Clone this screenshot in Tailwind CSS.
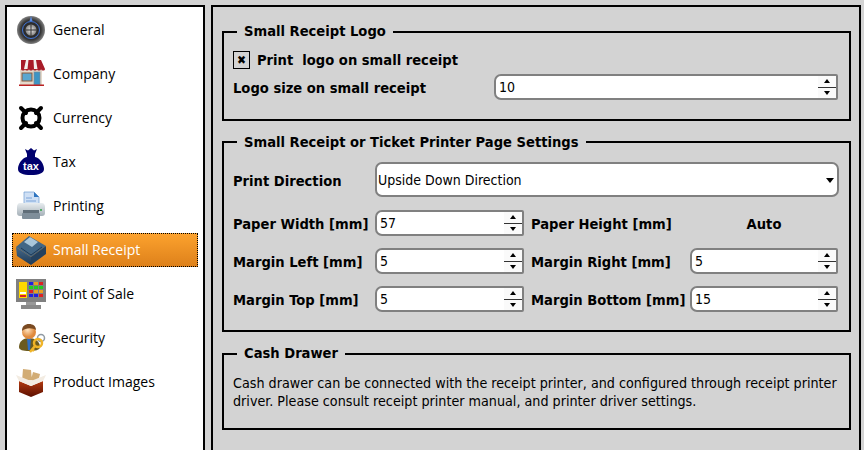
<!DOCTYPE html>
<html lang="en">
<head>
    <meta charset="UTF-8">
    <title>Settings - Small Receipt</title>
    <script src="https://cdn.jsdelivr.net/npm/@tailwindcss/browser@4"></script>
</head>
<body class="h-[450px] overflow-hidden bg-[#d3d3d3] font-['DejaVu_Sans_Condensed',sans-serif] text-black">
    <svg class="absolute h-0 w-0">
        <defs>
            <linearGradient id="boxRed" x1="0" y1="0" x2="0" y2="1"><stop offset="0" stop-color="#b23a10"/><stop offset="1" stop-color="#5c0f00"/></linearGradient>
            <linearGradient id="printerBody" x1="0" y1="0" x2="0" y2="1"><stop offset="0" stop-color="#e8edf0"/><stop offset="1" stop-color="#a5b0b8"/></linearGradient>
            <linearGradient id="receiptLeft" x1="0" y1="0" x2="0" y2="1"><stop offset="0" stop-color="#46698a"/><stop offset="1" stop-color="#1f3a55"/></linearGradient>
            <radialGradient id="knob"><stop offset="0" stop-color="#555"/><stop offset="0.7" stop-color="#333"/><stop offset="1" stop-color="#808080"/></radialGradient>
            <radialGradient id="disc"><stop offset="0" stop-color="#eee"/><stop offset="1" stop-color="#888"/></radialGradient>
            <radialGradient id="face" cx="0.4" cy="0.35"><stop offset="0" stop-color="#ffe3c0"/><stop offset="1" stop-color="#e08a3c"/></radialGradient>
        </defs>
    </svg>
    <div class="flex h-[470px] pt-[5px] pl-[5px] pr-[3px]">
        <!-- Sidebar -->
        <div class="w-[200px] shrink-0 border-2 border-black bg-white px-[5px] pt-[6px] font-['Open_Sans',sans-serif] text-[14px]">
            <div class="flex h-[34px] mb-[10px] items-center">
                <svg class="ml-[4px] w-[30px] h-[30px] shrink-0" viewBox="0 0 30 30">
                    <circle cx="15" cy="15" r="14" fill="url(#knob)"/>
                    <circle cx="15" cy="15" r="8.500" fill="#2c2c2c" stroke="#3f74d8" stroke-width="1"/>
                    <circle cx="15" cy="15" r="5.500" fill="url(#disc)"/>
                    <rect x="9.500" y="14.500" width="11" height="1" fill="#333"/>
                    <rect x="14.500" y="9.500" width="1" height="11" fill="#333"/>
                    <path d="M15 1l1.500 5h-3z" fill="#5b8be0"/>
                </svg>
                <span class="ml-[7px] pb-[2px]">General</span>
            </div>
            <div class="flex h-[34px] mb-[10px] items-center">
                <svg class="ml-[4px] w-[30px] h-[30px] shrink-0" viewBox="0 0 30 30">
                    <rect x="4" y="10" width="22" height="16" fill="#e4d9cb"/>
                    <rect x="6" y="14" width="10" height="8" fill="#5aa7cf" stroke="#8a5a3a"/>
                    <rect x="18" y="13" width="6" height="13" fill="#3d94c4" stroke="#7a8a95" stroke-width="0.700"/>
                    <rect x="3" y="25.500" width="25" height="1.500" fill="#b22"/>
                    <path d="M5 1h20l4 9c0 2-3.500 2-4 0 0 2-4 2-4 0 0 2-4 2-4 0 0 2-4 2-4 0 0 2-4 2-4 0 0 2-4 2-4 0z" fill="#a81c28"/>
                    <path d="M10 1h2.500l-1 9h-3.500zM17.500 1h2.500l1.500 9h-3.500z" fill="#f3f0ec"/>
                </svg>
                <span class="ml-[7px] pb-[2px]">Company</span>
            </div>
            <div class="flex h-[34px] mb-[10px] items-center">
                <svg class="ml-[4px] w-[30px] h-[30px] shrink-0" viewBox="0 0 30 30">
                    <circle cx="15" cy="15" r="8.500" fill="none" stroke="#000" stroke-width="4"/>
                    <path d="M5 5l5 5M25 5l-5 5M5 25l5-5M25 25l-5-5" stroke="#000" stroke-width="4" stroke-linecap="round"/>
                </svg>
                <span class="ml-[7px] pb-[2px]">Currency</span>
            </div>
            <div class="flex h-[34px] mb-[10px] items-center">
                <svg class="ml-[4px] w-[30px] h-[30px] shrink-0" viewBox="0 0 30 30">
                    <path d="M9 2l3 1.500L15 1l3 2.500L21 2l-2 5c0 1 0 2 0 3 5 1 9 7 9 12 0 4-5 6-13 6S2 26 2 22c0-5 4-11 9-12 0-1 0-2 0-3z" fill="#00006e"/>
                    <text x="15" y="23" text-anchor="middle" font-family="Liberation Sans" font-weight="700" font-size="11" fill="#fff">tax</text>
                </svg>
                <span class="ml-[7px] pb-[2px]">Tax</span>
            </div>
            <div class="flex h-[34px] mb-[10px] items-center">
                <svg class="ml-[4px] w-[30px] h-[30px] shrink-0" viewBox="0 0 30 30">
                    <path d="M8 1h10l5 5v9H8z" fill="#cfe0f5" stroke="#6f9bd1" stroke-width="0.700"/>
                    <path d="M18 1l5 5h-5z" fill="#2f75c0"/>
                    <path d="M10 7h6M10 10h10M10 13h10" stroke="#7ba3d8"/>
                    <path d="M4 12h22c2 0 3 2 3 4v6c0 2-1 3-3 3H4c-2 0-3-1-3-3v-6c0-2 1-4 3-4z" fill="url(#printerBody)"/>
                    <rect x="6" y="22" width="18" height="6" rx="1" fill="#7f8e9a"/>
                    <rect x="7" y="19" width="16" height="3" fill="#5f6d78"/>
                    <circle cx="25" cy="19" r="1" fill="#2ea043"/>
                </svg>
                <span class="ml-[7px] pb-[2px]">Printing</span>
            </div>
            <div class="relative flex h-[34px] mb-[10px] items-center bg-gradient-to-b from-[#fda32e] to-[#dd801a] text-white">
                <div class="absolute inset-0 border border-dotted border-black"></div>
                <svg class="ml-[4px] w-[30px] h-[30px] shrink-0" viewBox="0 0 30 30">
                    <path d="M0 12L13 1l17 10-15 11z" fill="#416686"/>
                    <path d="M0 12l15 10v8L1 21z" fill="url(#receiptLeft)"/>
                    <path d="M15 22l15-11v8L15 30z" fill="#24415e"/>
                    <path d="M8 7l6-5 8 5-6 5z" fill="#a9c6da"/>
                    <path d="M5 13l10 7 11-8" fill="none" stroke="#1f3a55" stroke-width="1"/>
                </svg>
                <span class="ml-[7px] pb-[2px]">Small Receipt</span>
            </div>
            <div class="flex h-[34px] mb-[10px] items-center">
                <svg class="ml-[4px] w-[30px] h-[30px] shrink-0" viewBox="0 0 30 30">
                    <rect x="0" y="0" width="30" height="23" fill="#808080"/>
                    <rect x="3" y="3" width="8" height="16" fill="#ffd800"/>
                    <rect x="4" y="13" width="6" height="2" fill="#fff"/>
                    <rect x="4" y="16" width="6" height="2" fill="#e02020"/>
                    <path d="M13 3h4v3h-4z" fill="#2020e0"/><path d="M18 3h4v3h-4z" fill="#e8a020"/><path d="M23 3h4v3h-4z" fill="#e02020"/>
                    <path d="M13 7h4v3h-4z" fill="#20d020"/><path d="M18 7h4v3h-4z" fill="#20d020"/><path d="M23 7h4v3h-4z" fill="#20d020"/>
                    <path d="M13 11h4v3h-4z" fill="#e02020"/><path d="M18 11h4v3h-4z" fill="#e8a020"/><path d="M23 11h4v3h-4z" fill="#e8a020"/>
                    <path d="M13 15h4v3h-4z" fill="#2020e0"/><path d="M18 15h4v3h-4z" fill="#2020e0"/><path d="M23 15h4v3h-4z" fill="#e02020"/>
                    <rect x="10" y="23" width="10" height="3" fill="#999"/>
                    <rect x="5" y="26" width="20" height="4" fill="#888"/>
                </svg>
                <span class="ml-[7px] pb-[2px]">Point of Sale</span>
            </div>
            <div class="flex h-[34px] mb-[10px] items-center">
                <svg class="ml-[4px] w-[30px] h-[30px] shrink-0" viewBox="0 0 30 30">
                    <path d="M3 24c0-6 5-9 10-9s11 3 11 9c0 3-5 4-11 4s-10-1-10-4z" fill="#6b5a1e"/>
                    <path d="M11 15h4l-1 12h-2z" fill="#2f6fc4"/>
                    <circle cx="13" cy="9" r="7" fill="url(#face)"/>
                    <path d="M6 8c0-5 3-7 7-7s7 2 7 6c-3-2-10-3-14 1z" fill="#7a4a22"/>
                    <circle cx="25" cy="15" r="3.500" fill="none" stroke="#8f9aa3" stroke-width="1.500"/>
                    <circle cx="22" cy="20" r="4" fill="none" stroke="#f0b428" stroke-width="2.500"/>
                    <path d="M19 23l-5 6M16 26l2 2" stroke="#f0b428" stroke-width="2.500"/>
                </svg>
                <span class="ml-[7px] pb-[2px]">Security</span>
            </div>
            <div class="flex h-[34px] items-center">
                <svg class="ml-[4px] w-[30px] h-[30px] shrink-0" viewBox="0 0 30 30">
                    <path d="M6 14L7 2l8 1 1 10zM15 13l2-8 7 2-2 8z" fill="#d2ac74"/>
                    <path d="M3 14l12 5 12-5v11l-12 5-12-5z" fill="url(#boxRed)"/>
                    <path d="M0 8l3 6 12 5 12-5 3-6-15 6z" fill="#f3ece2"/>
                </svg>
                <span class="ml-[7px] pb-[2px]">Product Images</span>
            </div>
        </div>

        <!-- Settings panel -->
        <div class="ml-[6px] flex-1 border-2 border-black pl-[9px] pr-[8px] pt-[15px] text-[14.6px] font-bold">
            <fieldset class="h-[99px] border-2 border-black pl-[9px]">
                <legend class="ml-[4px] px-[7px] pb-[1px] leading-[18px]">Small Receipt Logo</legend>
                <div class="flex h-[18px] mt-[10px] items-center">
                    <div class="flex w-[17px] h-[18px] items-center justify-center border border-black text-[12px] leading-none">✖</div>
                    <span class="ml-[7px] whitespace-pre">Print  logo on small receipt</span>
                </div>
                <div class="flex mt-[5px] items-center">
                    <span class="mt-[2px] w-[261px]">Logo size on small receipt</span>
                    <div class="flex h-[26px] w-[344px] rounded-l-[7px] rounded-r-[2px] border-2 border-[#808080] bg-white pl-[3px] text-[14px] font-normal">
                        <input class="min-w-0 flex-1 outline-none" value="10">
                        <div class="flex w-[18px] flex-col">
                            <div class="flex flex-1 items-center justify-center border-b border-[#333] bg-[#fafafa]"><div class="border-x-[3px] border-b-[4px] border-x-transparent border-b-black"></div></div>
                            <div class="flex flex-1 items-center justify-center bg-[#fafafa]"><div class="border-x-[3px] border-t-[4px] border-x-transparent border-t-black"></div></div>
                        </div>
                    </div>
                </div>
            </fieldset>

            <fieldset class="mt-[11px] h-[200px] border-2 border-black pl-[9px]">
                <legend class="ml-[4px] px-[7px] pt-[1px] leading-[18px]">Small Receipt or Ticket Printer Page Settings</legend>
                <div class="flex mt-[11px] items-center">
                    <span class="mt-[2px] w-[142px]">Print Direction</span>
                    <div class="flex h-[35px] w-[464px] items-center justify-between rounded-[7px] border-2 border-[#808080] bg-white pl-[1px] pr-[3px] text-[14px] font-normal">
                        <span class="mt-[2px]">Upside Down Direction</span>
                        <div class="mt-[2px] border-x-[4px] border-t-[5px] border-x-transparent border-t-black"></div>
                    </div>
                </div>
                <div class="mt-[13px] grid grid-cols-[142px_149px_7px_159px_148px] gap-y-[12px] items-center">
                    <span class="mt-[2px]">Paper Width [mm]</span>
                    <div class="flex h-[26px] rounded-l-[7px] rounded-r-[2px] border-2 border-[#808080] bg-white pl-[3px] text-[14px] font-normal">
                        <input class="min-w-0 flex-1 outline-none" value="57">
                        <div class="flex w-[18px] flex-col">
                            <div class="flex flex-1 items-center justify-center border-b border-[#333] bg-[#fafafa]"><div class="border-x-[3px] border-b-[4px] border-x-transparent border-b-black"></div></div>
                            <div class="flex flex-1 items-center justify-center bg-[#fafafa]"><div class="border-x-[3px] border-t-[4px] border-x-transparent border-t-black"></div></div>
                        </div>
                    </div>
                    <span></span>
                    <span class="mt-[2px]">Paper Height [mm]</span>
                    <span class="mt-[2px] text-center">Auto</span>

                    <span class="mt-[2px]">Margin Left [mm]</span>
                    <div class="flex h-[26px] rounded-l-[7px] rounded-r-[2px] border-2 border-[#808080] bg-white pl-[3px] text-[14px] font-normal">
                        <input class="min-w-0 flex-1 outline-none" value="5">
                        <div class="flex w-[18px] flex-col">
                            <div class="flex flex-1 items-center justify-center border-b border-[#333] bg-[#fafafa]"><div class="border-x-[3px] border-b-[4px] border-x-transparent border-b-black"></div></div>
                            <div class="flex flex-1 items-center justify-center bg-[#fafafa]"><div class="border-x-[3px] border-t-[4px] border-x-transparent border-t-black"></div></div>
                        </div>
                    </div>
                    <span></span>
                    <span class="mt-[2px]">Margin Right [mm]</span>
                    <div class="flex h-[26px] rounded-l-[7px] rounded-r-[2px] border-2 border-[#808080] bg-white pl-[3px] text-[14px] font-normal">
                        <input class="min-w-0 flex-1 outline-none" value="5">
                        <div class="flex w-[18px] flex-col">
                            <div class="flex flex-1 items-center justify-center border-b border-[#333] bg-[#fafafa]"><div class="border-x-[3px] border-b-[4px] border-x-transparent border-b-black"></div></div>
                            <div class="flex flex-1 items-center justify-center bg-[#fafafa]"><div class="border-x-[3px] border-t-[4px] border-x-transparent border-t-black"></div></div>
                        </div>
                    </div>

                    <span class="mt-[2px]">Margin Top [mm]</span>
                    <div class="flex h-[26px] rounded-l-[7px] rounded-r-[2px] border-2 border-[#808080] bg-white pl-[3px] text-[14px] font-normal">
                        <input class="min-w-0 flex-1 outline-none" value="5">
                        <div class="flex w-[18px] flex-col">
                            <div class="flex flex-1 items-center justify-center border-b border-[#333] bg-[#fafafa]"><div class="border-x-[3px] border-b-[4px] border-x-transparent border-b-black"></div></div>
                            <div class="flex flex-1 items-center justify-center bg-[#fafafa]"><div class="border-x-[3px] border-t-[4px] border-x-transparent border-t-black"></div></div>
                        </div>
                    </div>
                    <span></span>
                    <span class="mt-[2px]">Margin Bottom [mm]</span>
                    <div class="flex h-[26px] rounded-l-[7px] rounded-r-[2px] border-2 border-[#808080] bg-white pl-[3px] text-[14px] font-normal">
                        <input class="min-w-0 flex-1 outline-none" value="15">
                        <div class="flex w-[18px] flex-col">
                            <div class="flex flex-1 items-center justify-center border-b border-[#333] bg-[#fafafa]"><div class="border-x-[3px] border-b-[4px] border-x-transparent border-b-black"></div></div>
                            <div class="flex flex-1 items-center justify-center bg-[#fafafa]"><div class="border-x-[3px] border-t-[4px] border-x-transparent border-t-black"></div></div>
                        </div>
                    </div>
                </div>
            </fieldset>

            <fieldset class="mt-[12px] h-[86px] border-2 border-black pl-[9px]">
                <legend class="ml-[4px] px-[7px] pb-[1px] leading-[18px]">Cash Drawer</legend>
                <p class="mt-[11px] text-[14.2px] font-normal leading-[18px]">Cash drawer can be connected with the receipt printer, and configured through receipt printer<br>driver. Please consult receipt printer manual, and printer driver settings.</p>
            </fieldset>
        </div>
    </div>
</body>
</html>
